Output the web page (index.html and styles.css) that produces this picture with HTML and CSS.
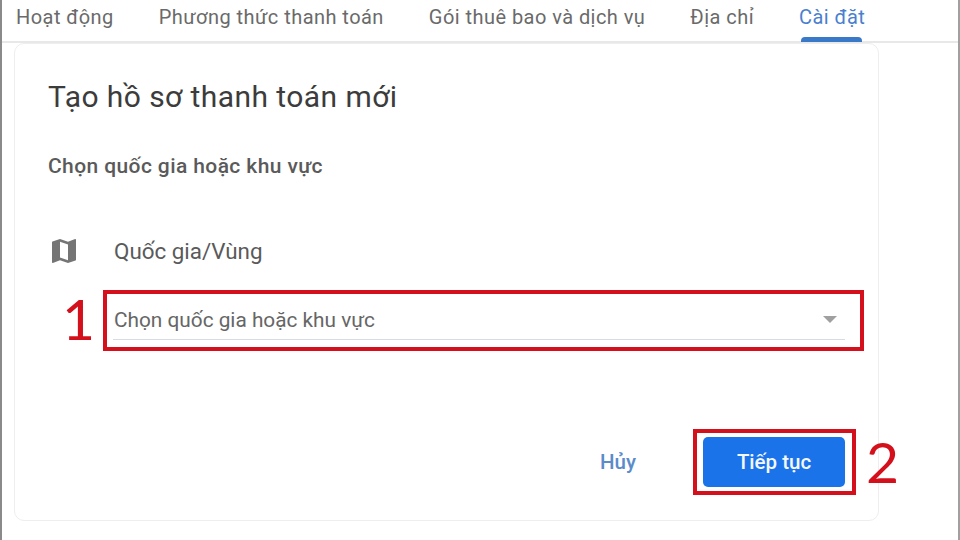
FILE: index.html
```html
<!DOCTYPE html>
<html lang="vi">
<head>
  <meta charset="UTF-8">
  <title>Tạo hồ sơ thanh toán mới</title>
  <link rel="stylesheet" href="styles.css">
</head>
<body>
  <div class="page">
    <!-- Tabs -->
    <div class="tabs">
      <span class="tab">Hoạt động</span>
      <span class="tab">Phương thức thanh toán</span>
      <span class="tab">Gói thuê bao và dịch vụ</span>
      <span class="tab">Địa chỉ</span>
      <span class="tab active">Cài đặt</span>
    </div>

    <div class="card">
      <h1>Tạo hồ sơ thanh toán mới</h1>
      <p class="subtitle">Chọn quốc gia hoặc khu vực</p>

      <div class="country-label">
        <svg class="map-icon" width="32" height="32" viewBox="0 0 24 24">
          <path fill="#757575" d="M20.5 3l-.16.03L15 5.1 9 3 3.36 4.9c-.21.07-.36.25-.36.48V20.5c0 .28.22.5.5.5l.16-.03L9 18.9l6 2.1 5.64-1.9c.21-.07.36-.25.36-.48V3.5c0-.28-.22-.5-.5-.5zM15 19l-6-2.11V5l6 2.11V19z"/>
        </svg>
        <span>Quốc gia/Vùng</span>
      </div>

      <div class="select">
        <span>Chọn quốc gia hoặc khu vực</span>
        <span class="arrow"></span>
      </div>

      <div class="actions">
        <button class="cancel-btn">Hủy</button>
        <button class="next-btn">Tiếp tục</button>
      </div>
    </div>

    <!-- Annotations rouges -->
    <div class="mark mark-select"></div>
    <div class="mark mark-button"></div>
    <span class="num num-1">1</span>
    <span class="num num-2">2</span>
  </div>
</body>
</html>
```

FILE: styles.css
```css
body {
  margin: 0;
  font-family: Roboto, "Liberation Sans", sans-serif;
  background: white;
  overflow: hidden;
}
.page {
  position: relative;
  width: 960px;
  height: 540px;
  box-sizing: border-box;
  border-left: 2px solid #8a8a8a;
  border-right: 2px solid #a0a0a0;
}
/* Onglets */
.tabs {
  display: flex;
  gap: 45px;
  height: 43px;
  box-sizing: border-box;
  padding-left: 14px;
  border-bottom: 2px solid #e8e8e8;
}
.tab {
  position: relative;
  font-size: 20px;
  line-height: 34px;
  color: #6a6a6a;
  letter-spacing: 0.45px;
  white-space: nowrap;
}
.tab.active {
  color: #4a7fd0;
}
.tab.active::after {
  content: "";
  position: absolute;
  left: 2px;
  right: 3px;
  bottom: -1px;
  height: 5px;
  background: #3a78c8;
  border-radius: 4px 4px 0 0;
}
.card {
  width: 865px;
  height: 478px;
  margin: 0 0 0 12px;
  box-sizing: border-box;
  padding: 35px 33px 0 33px;
  border: 1px solid #eeeeee;
  border-radius: 10px;
}
h1 {
  margin: 0;
  font-size: 30px;
  font-weight: 400;
  line-height: 36px;
  letter-spacing: 0.43px;
  color: #3c3c3c;
}
.subtitle {
  margin: 39px 0 0;
  font-size: 21px;
  font-weight: 500;
  line-height: 24px;
  letter-spacing: 0.4px;
  color: #5a5a5a;
}
.country-label {
  display: flex;
  align-items: center;
  gap: 34px;
  margin: 57px 0 0 0;
  font-size: 22.4px;
  color: #5a5a5a;
}
.map-icon {
  flex: none;
}
.select {
  display: flex;
  justify-content: space-between;
  align-items: center;
  height: 45px;
  margin: 28px 0 0 65px;
  padding: 5px 8px 0 1px;
  box-sizing: border-box;
  border-bottom: 1px solid #d8dce0;
  font-size: 20.8px;
  color: #666;
}
.arrow {
  width: 0;
  height: 0;
  border-left: 7px solid transparent;
  border-right: 7px solid transparent;
  border-top: 7px solid #a0a0a0;
}
.actions {
  display: flex;
  justify-content: flex-end;
  align-items: center;
  gap: 67px;
  margin-top: 97px;
}
.cancel-btn {
  background: none;
  border: none;
  padding: 0;
  font: 500 20.5px Roboto, sans-serif;
  color: #5a8cca;
}
.next-btn {
  width: 142px;
  height: 50px;
  background-color: #1a73e8;
  border: none;
  border-radius: 5px;
  font: 500 20.5px Roboto, sans-serif;
  color: #f4f8fe;
}
.mark {
  position: absolute;
  box-sizing: border-box;
  border: 4px solid #d3101c;
}
.mark-select {
  left: 101px;
  top: 290px;
  width: 761px;
  height: 61px;
}
.mark-button {
  left: 691px;
  top: 429px;
  width: 163px;
  height: 66px;
}
.num {
  position: absolute;
  font-family: Lato, sans-serif;
  font-size: 57px;
  line-height: 60px;
  color: #d3101c;
}
.num-1 {
  left: 60px;
  top: 288px;
}
.num-2 {
  left: 864px;
  top: 431px;
}
```
